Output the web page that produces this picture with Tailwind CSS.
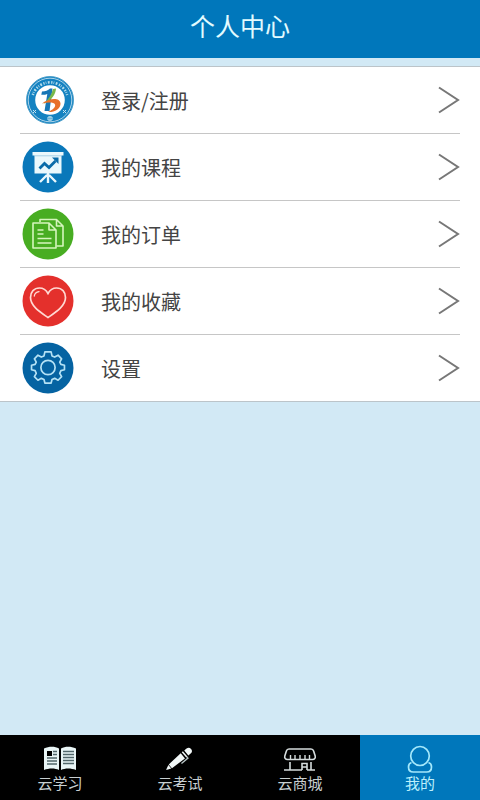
<!DOCTYPE html>
<html lang="zh-CN">
<head>
<meta charset="utf-8">
<meta name="viewport" content="width=device-width, initial-scale=1">
<title>个人中心</title>
<script src="https://cdn.jsdelivr.net/npm/@tailwindcss/browser@4"></script>
</head>
<body class="flex min-h-screen flex-col bg-[#d2e9f5] font-['Noto_Sans_CJK_SC',sans-serif]">
<header class="flex h-[58px] items-center justify-center bg-[#0077bb] pb-2">
  <h1 class="text-[25px] leading-8 font-normal text-[#e2fbff]">个人中心</h1>
</header>
<main class="flex-1 pt-2">
  <ul class="border-y border-[#bcc4c9] bg-white px-5">
    <li class="border-b border-[#c6c6c6]">
      <a href="#login" class="flex h-[66px] items-center text-[20px] leading-7 text-[#444]">
        <svg class="ml-1 h-[52px] w-[52px]" viewBox="0 0 52 52" fill="none" aria-hidden="true">
          <circle cx="26" cy="26" r="23.5" fill="#1482c1" stroke="#4c9fca"/>
          <circle cx="26" cy="26" r="21.8" stroke="#d3e9f2" stroke-width=".8"/>
          <circle cx="26" cy="26" r="14.8" fill="#fff"/>
          <path d="M8.8 21A18 18 0 0 1 43.2 21" stroke="#b5dceb" stroke-width="2.6" stroke-dasharray="1.3 1.1 .7 1.5 1.8 1.6"/>
          <g stroke="#c5e4ef" stroke-width="1"><path d="M9 36l3 3m0-3-3 3M24 43h4v3h-4zm2-1v5M39 36l3 3m0-3-3 3"/></g>
          <path d="M18 17.500c3.500 0 6-1 8-3h2.500L25.500 37h-5l2.800-17c-2 .8-4 1-6 .8z" fill="#1776b5"/>
          <path d="M32 14.500c-.5 6-3.500 11-12.500 15.500 5-5 8-9 9.500-15z" fill="#79b84a"/>
          <path d="M18 29.500c7-5.500 18-6.500 18.500 0 .3 5.500-6.500 9-12.500 8.500 4.500-2 8-5 7-7.500-1-2.500-7-2.500-13-1z" fill="#e8702a"/>
        </svg>
        <span class="ml-[25px] flex-1 pt-0.5">登录/注册</span>
        <svg class="h-7 w-[22px]" viewBox="0 0 22 28" fill="none" stroke="#777" stroke-width="2" aria-hidden="true"><path d="M1 1.500 20 14 1 26.500"/></svg>
      </a>
    </li>
    <li class="border-b border-[#c6c6c6]">
      <a href="#courses" class="flex h-[66px] items-center text-[20px] leading-7 text-[#444]">
        <svg class="ml-[2px] h-[52px] w-[52px]" viewBox="0 0 52 52" fill="none" aria-hidden="true">
          <circle cx="26" cy="26" r="25.500" fill="#0a78ba"/>
          <path d="M10.500 11h31v3.500h-2v18h-27v-18h-2z" fill="#eaf8fc"/>
          <path d="M12.500 14.800h27" stroke="#8dc0dc" stroke-width=".7"/>
          <path d="m17.500 27.500 5-5 4.500 4 6.500-6.500" stroke="#0a6ba8" stroke-width="2.800"/>
          <path d="M30 16.500h6.500V23z" fill="#0a6ba8"/>
          <path d="M26 32v10M25 34l-7 7M27 34l7 7" stroke="#eaf8fc" stroke-width="2.400"/>
        </svg>
        <span class="ml-[27px] flex-1 pt-0.5">我的课程</span>
        <svg class="h-7 w-[22px]" viewBox="0 0 22 28" fill="none" stroke="#777" stroke-width="2" aria-hidden="true"><path d="M1 1.500 20 14 1 26.500"/></svg>
      </a>
    </li>
    <li class="border-b border-[#c6c6c6]">
      <a href="#orders" class="flex h-[66px] items-center text-[20px] leading-7 text-[#444]">
        <svg class="ml-[2px] h-[52px] w-[52px]" viewBox="0 0 52 52" fill="none" aria-hidden="true">
          <circle cx="26" cy="26" r="25.500" fill="#48ad22"/>
          <g stroke="#d5f5bd" stroke-width="1.600" stroke-linejoin="round">
            <path d="M18 14v-2.500h16.500L41 18v20h-6.500M34.500 11.500V18H41"/>
            <path d="M11 15h16l7 7v18H11zM27 15v7h7"/>
            <path d="M15.500 22h6M15.500 26h6M15.500 30.500h14M15.500 35h14"/>
          </g>
        </svg>
        <span class="ml-[27px] flex-1 pt-0.5">我的订单</span>
        <svg class="h-7 w-[22px]" viewBox="0 0 22 28" fill="none" stroke="#777" stroke-width="2" aria-hidden="true"><path d="M1 1.500 20 14 1 26.500"/></svg>
      </a>
    </li>
    <li class="border-b border-[#c6c6c6]">
      <a href="#favorites" class="flex h-[66px] items-center text-[20px] leading-7 text-[#444]">
        <svg class="ml-[2px] h-[52px] w-[52px]" viewBox="0 0 52 52" fill="none" aria-hidden="true">
          <circle cx="26" cy="26" r="25.500" fill="#e4302c"/>
          <g stroke="#ffd9d3" stroke-width="1.700" stroke-linecap="round">
            <path d="M26 18.500C23.500 14 20.500 13 17.500 13 12 13 8.500 17 8.500 22.500 8.500 31 18 37 26 42.500 34 37 43.500 31 43.500 22.500 43.500 17 40 13 34.500 13 31.500 13 28.500 14 26 18.500z"/>
            <path d="M12.300 21c.4-2.500 2-4 4.700-4.400" stroke-width="1.300"/>
          </g>
        </svg>
        <span class="ml-[27px] flex-1 pt-0.5">我的收藏</span>
        <svg class="h-7 w-[22px]" viewBox="0 0 22 28" fill="none" stroke="#777" stroke-width="2" aria-hidden="true"><path d="M1 1.500 20 14 1 26.500"/></svg>
      </a>
    </li>
    <li>
      <a href="#settings" class="flex h-[66px] items-center text-[20px] leading-7 text-[#444]">
        <svg class="ml-[2px] h-[52px] w-[52px]" viewBox="0 0 52 52" fill="none" aria-hidden="true">
          <circle cx="26" cy="26" r="25.500" fill="#0563a2"/>
          <g stroke="#b5e2f5" stroke-width="1.900" stroke-linejoin="round" transform="translate(26 25.500) scale(.89) translate(-26 -26.500)">
            <circle cx="26" cy="26.500" r="8"/>
            <path d="M22.500 9h7l1 4.500 3 1.300 3.800-2.100 4 4-2.100 3.800 1.300 2.500 4 1v5l-4 1-1.300 3 2.100 3.800-4 4-3.800-2.100-3 1.300-1 4h-7l-1-4-3-1.300-3.800 2.100-4-4 2.100-3.800-1.300-3-4-1v-5l4-1 1.300-2.500-2.100-3.800 4-4 3.800 2.100 3-1.300z"/>
          </g>
        </svg>
        <span class="ml-[27px] flex-1 pt-0.5">设置</span>
        <svg class="h-7 w-[22px]" viewBox="0 0 22 28" fill="none" stroke="#777" stroke-width="2" aria-hidden="true"><path d="M1 1.500 20 14 1 26.500"/></svg>
      </a>
    </li>
  </ul>
</main>
<nav class="grid h-[65px] grid-cols-4 bg-black text-[15px] leading-5 text-[#c8cfd1]">
  <a href="#study" class="flex flex-col items-center pt-2">
    <svg class="h-[30px] w-9" viewBox="0 0 36 30" fill="none" aria-hidden="true">
      <path d="M2 5.500C7 3 13 3 17 5.500V27c-4-2-10-2-15 0zM19 5.500c4-2.500 10-2.500 15 0V27c-5-2-11-2-15 0z" fill="#e9f5f6"/>
      <path d="M5 8h5v5H5z" fill="#000"/>
      <path d="M11 8.500h4M11 11.500h4M5 15h10M5 18h10M5 21h10M21 8.500h11M21 11.500h11M21 14.500h11M21 17.500h11M21 20.500h11" stroke="#52676b" stroke-width="1.400"/>
    </svg>
    <span>云学习</span>
  </a>
  <a href="#exam" class="flex flex-col items-center pt-2">
    <svg class="h-[30px] w-9" viewBox="0 0 36 30" aria-hidden="true">
      <g transform="translate(4 27) rotate(-40)" fill="#f2f8f8">
        <path d="M0 0 5-2.300v4.600zM5.700-2.500 22-3.300v6.600L5.700 2.500zM23.500-3.500H25v7h-1.500zM26.500-3.200h3a3.200 3.200 0 0 1 0 6.400h-3z"/>
        <path d="M16 5h8.500V3" fill="none" stroke="#b6c3c4" stroke-width="1.300"/>
      </g>
    </svg>
    <span>云考试</span>
  </a>
  <a href="#mall" class="flex flex-col items-center pt-2">
    <svg class="h-[30px] w-9" viewBox="0 0 36 30" fill="none" stroke="#d5dcdd" stroke-width="1.600" aria-hidden="true">
      <path d="M7 6h22c1.500 0 2.200.7 2.600 2l1.600 5c.5 2-.7 3.500-2.700 3.500h-25c-2 0-3.200-1.500-2.700-3.500L4.400 8C4.800 6.700 5.500 6 7 6z"/>
      <path d="M8.500 12v4M13 12v4M18 12v4M23 12v4M27.500 12v4" stroke-width="1.400"/>
      <path d="M8 19v8M29 19v8M2 27h18M25 27h8M20 27v-6.500h5V27M20 24h5"/>
    </svg>
    <span>云商城</span>
  </a>
  <a href="#mine" aria-current="page" class="flex flex-col items-center bg-[#0077bb] pt-2 text-[#bdf0fb]">
    <svg class="h-[30px] w-9" viewBox="0 0 36 30" fill="none" stroke="#a4e8fb" stroke-width="1.700" aria-hidden="true">
      <ellipse cx="18" cy="13" rx="9.300" ry="9.500"/>
      <path d="M9.500 19.500C7.300 20.200 6.500 22 6.500 24c0 3 1.800 5 4.800 5h13.400c3 0 4.800-2 4.800-5 0-2-.8-3.800-3-4.500"/>
    </svg>
    <span>我的</span>
  </a>
</nav>
</body>
</html>
